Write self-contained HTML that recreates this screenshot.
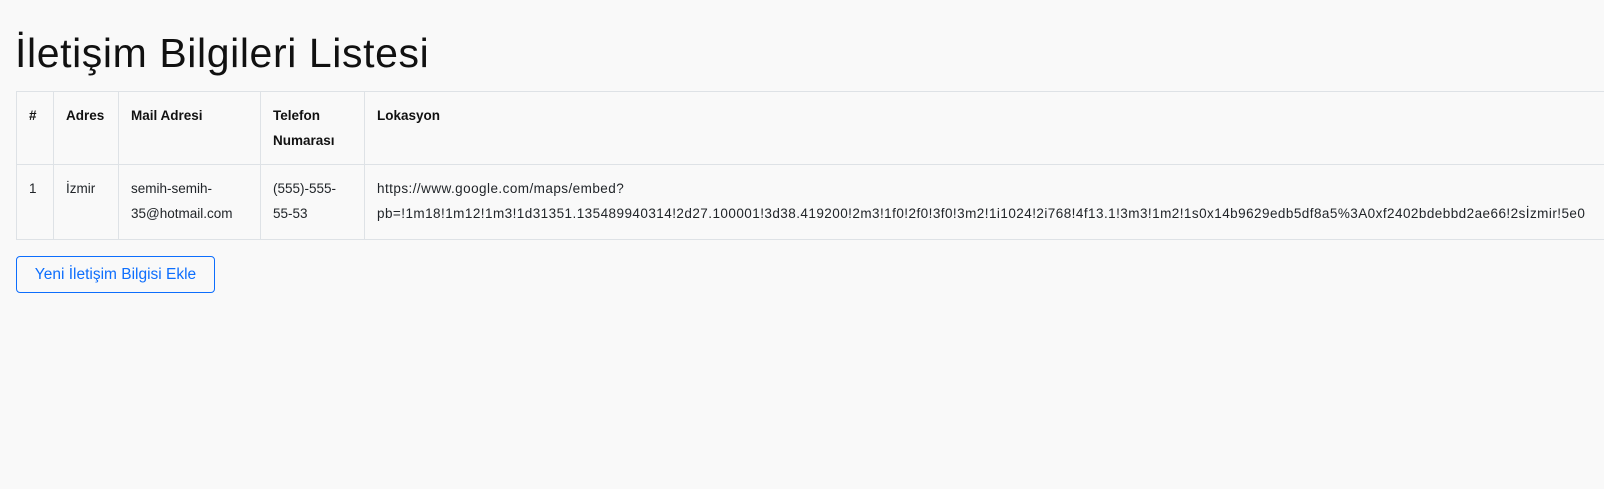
<!DOCTYPE html>
<html><head><meta charset="utf-8"><style>
html,body{margin:0;padding:0;background:#f9f9f9;width:1604px;height:489px;overflow:hidden;font-family:"Liberation Sans",sans-serif;color:#212529;position:relative}
h1{position:absolute;left:15px;top:28px;margin:0;font-weight:400;font-size:41px;line-height:50px;color:#111;letter-spacing:0.6px}
table{position:absolute;left:16px;top:91px;border-collapse:collapse;font-size:13.5px;white-space:nowrap;table-layout:fixed;width:1700px}
td,th{border:1px solid #dee2e6;vertical-align:top;text-align:left;padding:11px 12px 0 12px;line-height:25px;overflow:hidden}
th{font-weight:700;height:61px;color:#111}
tr.b td{height:63px}
td.u{letter-spacing:0.45px}
.btn{position:absolute;left:16px;top:256px;width:197px;height:35px;border:1px solid #0d6efd;border-radius:4px;color:#0d6efd;font-size:15.5px;line-height:35px;text-align:center;box-sizing:content-box}
</style></head><body>
<h1>İletişim Bilgileri Listesi</h1>
<table>
<colgroup><col style="width:37px"><col style="width:65px"><col style="width:142px"><col style="width:104px"><col></colgroup>
<tr><th>#</th><th>Adres</th><th>Mail Adresi</th><th>Telefon<br>Numarası</th><th>Lokasyon</th></tr>
<tr class="b"><td>1</td><td>İzmir</td><td>semih-semih-<br>35@hotmail.com</td><td>(555)-555-<br>55-53</td><td class="u">https://www.google.com/maps/embed?<br>pb=!1m18!1m12!1m3!1d31351.135489940314!2d27.100001!3d38.419200!2m3!1f0!2f0!3f0!3m2!1i1024!2i768!4f13.1!3m3!1m2!1s0x14b9629edb5df8a5%3A0xf2402bdebbd2ae66!2sİzmir!5e0</td></tr>
</table>
<div class="btn">Yeni İletişim Bilgisi Ekle</div>
</body></html>
